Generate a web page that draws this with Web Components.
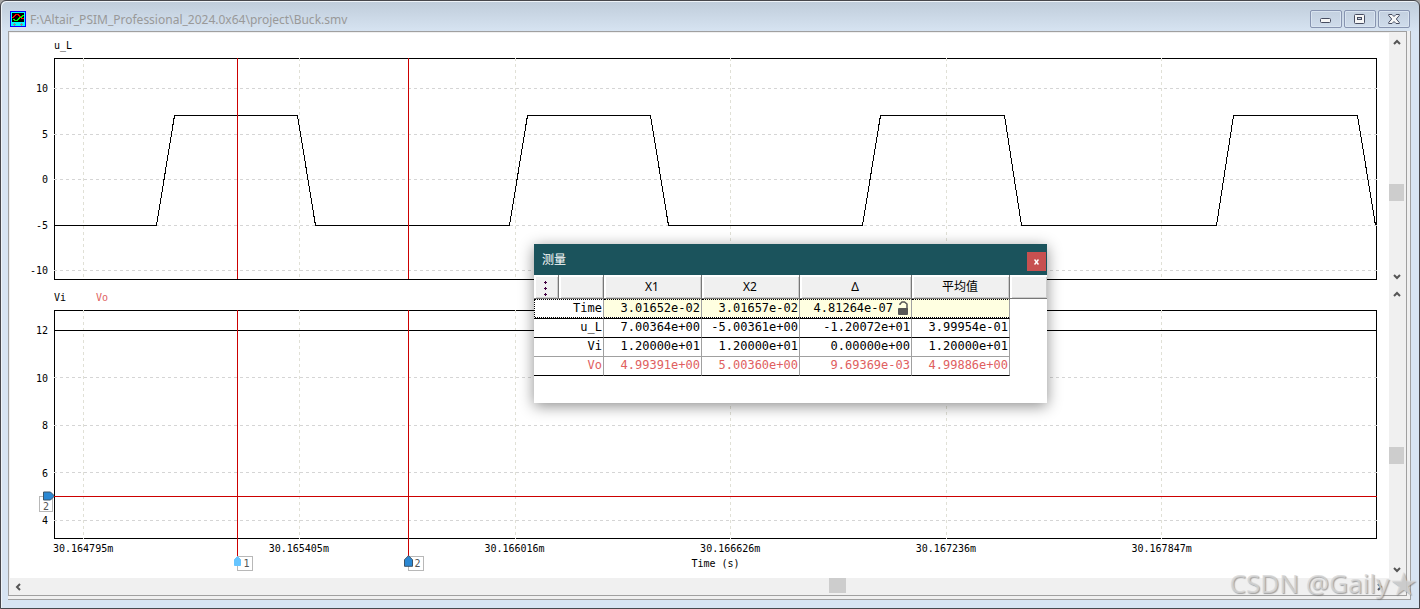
<!DOCTYPE html>
<html lang="zh-CN">
<head>
<meta charset="utf-8">
<title>Buck.smv</title>
<style>
  body {
    margin: 0;
    background: #a5a5a5;
    color: #000;
    font-family: "DejaVu Sans Mono", "Liberation Mono", monospace;
    font-size: 10px;
  }
</style>
</head>
<body>
<sim-window>
  <span slot="title">F:\Altair_PSIM_Professional_2024.0x64\project\Buck.smv</span>
  <wave-pane id="pane-top"></wave-pane>
  <wave-pane id="pane-bottom"></wave-pane>
  <scroll-bar slot="bottom" direction="horizontal" before="61" after="40"></scroll-bar>
  <measure-dialog slot="overlay">
    <span slot="title">测量</span>
    <measure-table></measure-table>
  </measure-dialog>
  <water-mark slot="overlay">CSDN @Gaily<span slot="star">★</span></water-mark>
</sim-window>

<script>
// Main window frame with the title bar and its three buttons
class SimWindow extends HTMLElement {
  constructor() {
    super();
    const shadow = this.attachShadow({mode: "open"});
    shadow.innerHTML = `
      <style>
        :host {
          display: block;
          position: relative;
          box-sizing: border-box;
          border: 1px solid #47474c;
          border-radius: 6px 6px 0 0;
          padding: 0 8px 8px 7px;
          background: linear-gradient(#bfccda, #d7e4f2 31px);
          overflow: hidden;
          box-shadow: inset 1px 1px #eef3f8;
        }
        header {
          display: flex;
          align-items: center;
          height: 30px;
          padding: 6px 1px 0 0;
          box-sizing: border-box;
        }
        .logo {
          width: 16px;
          height: 16px;
          margin: 0 4px 0 2px;
        }
        .title {
          flex: 1;
          padding-top: 2px;
          color: #999;
          font: 12px/16px "Noto Sans", sans-serif;
        }
        .buttons {
          display: flex;
          gap: 2px;
        }
        button {
          width: 32px;
          height: 18px;
          padding: 0;
          border: 1px solid #8794b0;
          border-radius: 2px;
          background: linear-gradient(#c3d0df, #cfdceb);
          box-shadow: inset 0 0 0 1px #d9e4f0;
        }
        button svg {
          display: block;
          margin: auto;
        }
        .outer {
          background: #f0f0f0;
          border: solid #a0a0a0;
          border-width: 0 1px 1px 0;
          padding: 0 3px 3px 0;
        }
        .inner {
          border: 1px solid #a0a0a0;
          background: #f0f0f0;
          padding: 1px 0 0 1px;
        }
        .bottom {
          margin-right: 17px;
        }
      </style>
      <header>
        <svg class="logo" viewBox="0 0 16 16" shape-rendering="crispEdges">
          <rect width="16" height="16" fill="#00f"/>
          <rect x="1" y="1" width="14" height="14" fill="#0ff"/>
          <rect x="2" y="2" width="12" height="9" fill="#000"/>
          <path d="M2 6.5h1v-1h1v-1h1v-1h3v1h1v1h1v1h1v1h3" fill="none" stroke="#f00"/>
          <path d="M3 8.5h1v1h3v-1h1v-1h1v-1h2v-1h1v-1h2" fill="none" stroke="#0f0"/>
          <path d="M3 13.5h3M4.5 12v3M10 13.5h3M11.5 12v3" stroke="#8a8a8a"/>
        </svg>
        <div class="title"><slot name="title"></slot></div>
        <div class="buttons">
          <button aria-label="Minimize"><svg width="12" height="10" viewBox="0 0 12 10"><rect x=".5" y="4.5" width="10" height="4" rx="1" fill="#f6f6f6" stroke="#464c60"/></svg></button>
          <button aria-label="Restore"><svg width="12" height="10" viewBox="0 0 12 10"><rect x=".5" y=".5" width="10" height="9" rx="1" fill="#f6f6f6" stroke="#464c60"/><rect x="3.5" y="3.5" width="4" height="2" fill="#c8d4e2" stroke="#464c60"/></svg></button>
          <button aria-label="Close"><svg width="12" height="10" viewBox="0 0 12 10"><path d="M.7.5h3.300l2 2 2-2h3.300v1L8.300 5l3 3.500v1H8l-2-2-2 2H.7v-1l3-3.500-3-3.500z" fill="#f6f6f6" stroke="#464c60"/></svg></button>
        </div>
      </header>
      <div class="outer">
        <div class="inner">
          <slot></slot>
          <div class="bottom"><slot name="bottom"></slot></div>
        </div>
      </div>
      <slot name="overlay"></slot>`;
  }
}
customElements.define("sim-window", SimWindow);

// Flat scrollbar, before / after are the weights of the track on each side of the thumb
class ScrollBar extends HTMLElement {
  constructor() {
    super();
    this.attachShadow({mode: "open"});
  }

  connectedCallback() {
    const horizontal = this.getAttribute("direction") === "horizontal";
    const first = horizontal ? "M6 1 3 4l3 3" : "M1 6l3-3 3 3";
    const last = horizontal ? "M2 1l3 3-3 3" : "M1 2l3 3 3-3";
    this.shadowRoot.innerHTML = `
      <style>
        :host {
          display: flex;
          flex-direction: ${horizontal ? "row" : "column"};
          background: #f0f0f0;
          ${horizontal ? "height" : "width"}: 17px;
        }
        button {
          flex: none;
          display: grid;
          place-items: center;
          width: 17px;
          height: 17px;
          padding: 0 2px 0 0;
          border: 0;
          background: none;
        }
        path {
          fill: none;
          stroke: #555;
          stroke-width: 2;
        }
        .before { flex: ${this.getAttribute("before")}; }
        .after { flex: ${this.getAttribute("after")}; }
        .thumb {
          width: ${horizontal ? 17 : 15}px;
          height: ${horizontal ? 15 : 17}px;
          background: #cdcdcd;
        }
      </style>
      <button aria-label="Scroll back"><svg width="8" height="8"><path d="${first}"/></svg></button>
      <div class="before"></div>
      <div class="thumb"></div>
      <div class="after"></div>
      <button aria-label="Scroll forward"><svg width="8" height="8"><path d="${last}"/></svg></button>`;
  }
}
customElements.define("scroll-bar", ScrollBar);

// Small numbered flag of a cursor or a curve
class CursorTag extends HTMLElement {
  constructor() {
    super();
    this.attachShadow({mode: "open"});
  }

  connectedCallback() {
    const side = this.hasAttribute("side");
    const light = this.hasAttribute("light");
    const fill = light ? "#66c5ff" : "#2b88d3";
    const edge = light ? "#66c5ff" : "#3d5468";
    this.shadowRoot.innerHTML = `
      <style>
        :host {
          position: absolute;
          display: block;
          color: #555;
          line-height: 12px;
        }
        span {
          display: block;
          box-sizing: border-box;
          width: ${side ? 14 : 16}px;
          height: ${side ? 16 : 15}px;
          border: 1px solid #b8b8b8;
          background: #fff;
          text-align: center;
          padding: ${side ? "4px 0 0" : "1px 0 0 3px"};
        }
        svg {
          position: absolute;
          left: ${side ? 4 : -5}px;
          top: ${side ? -5 : -1}px;
        }
      </style>
      <span>${this.textContent}</span>
      ${side
        ? `<svg width="12" height="10"><path d="M.5 1h7l4 4-4 4h-7z" fill="${fill}" stroke="${edge}"/></svg>`
        : `<svg width="11" height="12"><path d="${light ? "M5.500 1.500l3 3v6h-6v-6z" : "M5.500.7l4 4v6.600h-8V4.700z"}" fill="${fill}" stroke="${edge}"/></svg>`}`;
  }
}
customElements.define("cursor-tag", CursorTag);

const PLOT_WIDTH = 1323;
const GRID_X = [29, 245, 461, 676, 892, 1107];
const CURSORS = [183, 354];

// One chart with its curve names, axes and scrollbar
class WavePane extends HTMLElement {
  constructor() {
    super();
    this.attachShadow({mode: "open"});
  }

  set data(data) {
    if (!data) return;

    const h = data.height;
    const gridX = GRID_X.map(x => `<path class="gx" d="M${x}.5 0V${h}"/>`).join("");
    const gridY = data.gridY.map(y => `<path class="gy" d="M0 ${y}.5H${PLOT_WIDTH}"/>`).join("");
    const curves = data.curves.map(c => `<polyline points="${c.points}" stroke="${c.stroke}"/>`).join("");
    const cursors = CURSORS.map(x => `<path class="cursor" d="M${x}.5 0V${data.times ? h + 18 : h - 1}"/>`).join("");
    const tags = data.times ? CURSORS.map((x, i) =>
      `<cursor-tag ${i ? "" : "light"} style="left:${x / PLOT_WIDTH * 100}%;top:${h + 17}px">${i + 1}</cursor-tag>`).join("") : "";

    this.shadowRoot.innerHTML = `
      <style>
        :host {
          display: flex;
          line-height: 12px;
        }
        .chart {
          flex: 1;
          background: #fff;
          padding: 0 12px ${data.times ? 9 : 5}px 0;
          display: grid;
          grid-template-columns: 44px 1fr;
          grid-template-rows: 25px auto;
        }
        .names {
          grid-column: 2;
          display: flex;
          gap: 30px;
          padding-top: 7px;
        }
        .levels {
          position: relative;
          display: flex;
          flex-direction: column;
          justify-content: space-between;
          box-sizing: border-box;
          height: ${h}px;
          padding: ${data.levelPadding};
          text-align: right;
        }
        .plot {
          position: relative;
          height: ${h}px;
        }
        .plot svg {
          display: block;
          width: 100%;
          height: ${h}px;
          overflow: visible;
          shape-rendering: crispEdges;
        }
        .plot path, .plot polyline, .plot rect {
          fill: none;
          vector-effect: non-scaling-stroke;
        }
        .frame { stroke: #000; }
        .gx { stroke: #e0e0d6; stroke-dasharray: 3 3; }
        .gy { stroke: #d5d5d5; stroke-dasharray: 3 3; }
        .cursor { stroke: #c00; }
        .times, .unit {
          grid-column: 2;
        }
        .times {
          display: flex;
          justify-content: space-between;
          padding-right: 14%;
          margin-left: -1px;
          line-height: 20px;
        }
        .unit {
          text-align: center;
          line-height: 10px;
        }
      </style>
      <div class="chart">
        <div class="names">${data.curves.map(c => `<span style="color:${c.label}">${c.name}</span>`).join("")}</div>
        <div class="levels">
          ${data.levels.map(l => `<span>${l}</span>`).join("")}
          ${data.curveTag ? `<cursor-tag side style="left:29px;top:${data.curveTag}px">2</cursor-tag>` : ""}
        </div>
        <div class="plot">
          <svg viewBox="0 0 ${PLOT_WIDTH} ${h}" preserveAspectRatio="none">
            <rect class="frame" x=".5" y=".5" width="${PLOT_WIDTH - 1}" height="${h - 1}"/>
            ${gridX}${gridY}${curves}${cursors}
          </svg>
          ${tags}
        </div>
        ${data.times ? `<div class="times">${data.times.map(t => `<span>${t}</span>`).join("")}</div>
        <div class="unit">Time (s)</div>` : ""}
      </div>
      <scroll-bar before="${data.scroll[0]}" after="${data.scroll[1]}"></scroll-bar>`;
  }
}
customElements.define("wave-pane", WavePane);

// Floating tool window
class MeasureDialog extends HTMLElement {
  constructor() {
    super();
    const shadow = this.attachShadow({mode: "open"});
    shadow.innerHTML = `
      <style>
        :host {
          position: absolute;
          left: 533px;
          top: 243px;
          display: block;
          width: 513px;
          padding-bottom: 27px;
          background: #fff;
          box-shadow: 0 3px 14px rgba(0, 0, 0, .45);
        }
        header {
          display: flex;
          align-items: center;
          justify-content: space-between;
          height: 31px;
          padding: 0 1px 0 8px;
          background: #1b535c;
          color: #fff;
          font: 12px/16px "Noto Sans", "Noto Sans CJK SC", sans-serif;
        }
        button {
          display: grid;
          place-items: center;
          width: 19px;
          height: 19px;
          margin-top: 4px;
          padding: 0;
          border: 0;
          background: #c75050;
        }
      </style>
      <header>
        <slot name="title"></slot>
        <button aria-label="Close"><svg width="5" height="6"><path d="M.5.5l4 5M4.500.5l-4 5" stroke="#fff" stroke-width="1.500"/></svg></button>
      </header>
      <slot></slot>`;
  }
}
customElements.define("measure-dialog", MeasureDialog);

const MEASURES = [
  ["Time", "3.01652e-02", "3.01657e-02", "4.81264e-07", ""],
  ["u_L", "7.00364e+00", "-5.00361e+00", "-1.20072e+01", "3.99954e-01"],
  ["Vi", "1.20000e+01", "1.20000e+01", "0.00000e+00", "1.20000e+01"],
  ["Vo", "4.99391e+00", "5.00360e+00", "9.69369e-03", "4.99886e+00"]
];

class MeasureTable extends HTMLElement {
  constructor() {
    super();
    const shadow = this.attachShadow({mode: "open"});
    const lock = `<svg width="10" height="14" viewBox="0 0 10 14"><path d="M2 4V3l2-2h2.500L9 3v5" fill="none" stroke="#555" stroke-width="1.500"/><rect y="7" width="10" height="7" rx="1" fill="#555"/></svg>`;
    const rows = MEASURES.map(([name, ...values]) => `
      <tr class="${name}">
        <th scope="row" colspan="2">${name}</th>
        ${values.map((v, i) => `<td>${name === "Time" && i === 2 ? `<div class="locked">${v}${lock}</div>` : v}</td>`).join("")}
      </tr>`).join("");
    shadow.innerHTML = `
      <style>
        :host {
          display: block;
        }
        table {
          width: 100%;
          table-layout: fixed;
          border-collapse: separate;
          border-spacing: 0;
          font-size: 12px;
          line-height: 14px;
        }
        th, td {
          box-sizing: border-box;
          padding: 0 1px 0 0;
          font-weight: normal;
          text-align: right;
        }
        thead th {
          height: 24px;
          border: solid #777;
          border-width: 0 1px 1px 0;
          background: #f0f0f0;
          box-shadow: inset 2px 2px #fff, inset -1px -1px #ccc;
          font-family: "Noto Sans", "Noto Sans CJK SC", sans-serif;
          text-align: center;
        }
        thead th:last-child {
          border-right: 0;
        }
        thead svg {
          display: block;
          margin: 2px auto 0;
        }
        tbody th, tbody td {
          height: 19px;
          border: solid #000;
          border-width: 0 0 1px;
          padding-bottom: 2px;
        }
        tbody th, tbody td {
          border-right: 1px solid #a0a0a0;
        }
        tbody .Time > * {
          height: 20px;
          border-top: 1px dotted #000;
          background: linear-gradient(90deg, #000 50%, #fff 50%) 0 100% / 2px 1px repeat-x #ffffe1;
        }
        tbody .Time th {
          background-color: #fff;
          border-left: 1px dotted #000;
        }
        tbody .Vi > * {
          border-bottom-color: #a0a0a0;
        }
        .Vo {
          color: #e06060;
        }
        .locked {
          display: flex;
          align-items: center;
          justify-content: flex-end;
          gap: 5px;
          padding-right: 2px;
        }
      </style>
      <table>
        <colgroup>
          <col width="25"><col width="45"><col width="98"><col width="98"><col width="112"><col width="98"><col>
        </colgroup>
        <thead>
          <tr>
            <th aria-label="Menu"><svg width="3" height="16" shape-rendering="crispEdges"><path d="M0 2.500h3M1.500 1v3M0 8.500h3M1.500 7v3M0 14.500h3M1.500 13v3" stroke="#400040"/></svg></th>
            <th></th><th>X1</th><th>X2</th><th>Δ</th><th>平均值</th><th></th>
          </tr>
        </thead>
        <tbody>${rows}</tbody>
      </table>`;
  }
}
customElements.define("measure-table", MeasureTable);

class WaterMark extends HTMLElement {
  constructor() {
    super();
    const shadow = this.attachShadow({mode: "open"});
    shadow.innerHTML = `
      <style>
        :host {
          position: absolute;
          right: 1px;
          bottom: 7px;
          display: flex;
          align-items: center;
          color: rgba(215, 215, 215, .8);
          font: 26px/36px "Noto Sans", "DejaVu Sans", sans-serif;
          text-shadow: 1px 1px 1px rgba(110, 110, 110, .6);
          pointer-events: none;
        }
        .star {
          font-size: 32px;
        }
      </style>
      <slot></slot><span class="star"><slot name="star"></slot></span>`;
  }
}
customElements.define("water-mark", WaterMark);

document.querySelector("#pane-top").data = {
  height: 222,
  levels: ["10", "5", "0", "-5", "-10"],
  levelPadding: "25px 6px 3px 0",
  gridY: [30, 76, 121, 167, 212],
  scroll: [2, 1],
  curves: [{
    name: "u_L",
    label: "#000",
    stroke: "#000",
    points: "0,167.5 102.5,167.5 120.5,57.5 243.5,57.5 261.5,167.5 455.5,167.5 473.5,57.5 596.5,57.5 614.5,167.5 808.5,167.5 826.5,57.5 950.5,57.5 967.5,167.5 1162.5,167.5 1179.5,57.5 1303.5,57.5 1321.5,167.5"
  }]
};

document.querySelector("#pane-bottom").data = {
  height: 229,
  levels: ["12", "10", "8", "6", "4"],
  levelPadding: "15px 6px 12px 0",
  gridY: [20, 67, 115, 162, 210],
  scroll: [3, 2],
  curveTag: 186,
  times: ["30.164795m", "30.165405m", "30.166016m", "30.166626m", "30.167236m", "30.167847m"],
  curves: [
    {name: "Vi", label: "#000", stroke: "#000", points: "0,20.5 1323,20.5"},
    {name: "Vo", label: "#e06060", stroke: "#c00", points: "0,186.5 1323,186.5"}
  ]
};
</script>
</body>
</html>
